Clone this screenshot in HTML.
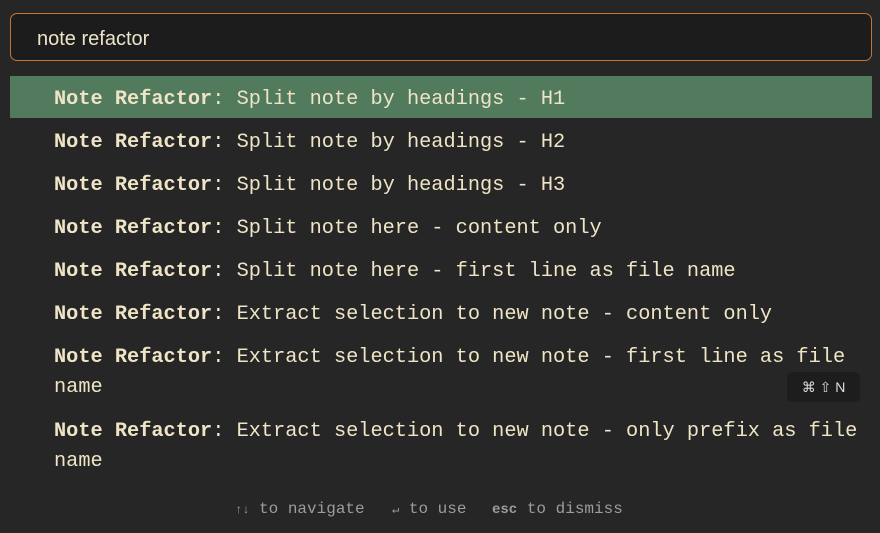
<!DOCTYPE html>
<html><head><style>
html,body{margin:0;padding:0;width:880px;height:533px;background:#262626;overflow:hidden}
body{position:relative;font-family:"Liberation Mono",monospace;color:#efe5c6}
.inp{position:absolute;left:10px;top:13px;width:862px;height:48px;border:1.5px solid #c47536;border-radius:7px;background:#1c1c1c;box-sizing:border-box}
.inp span{position:absolute;left:26px;top:14px;font-family:"Liberation Sans",sans-serif;font-size:20px;color:#ede4c8}
.row{position:absolute;left:10px;width:862px;font-size:20.3px;white-space:pre}
.row .t{position:absolute;left:44px}
.sel{background:#527a5c}
b{font-weight:bold}
.kb{position:absolute;left:787px;top:372px;width:73px;height:30px;background:#1d1d1d;border-radius:5px;font-family:"Liberation Sans",sans-serif;font-size:14px;color:#ddd;text-align:center;line-height:30px}
.ft{position:absolute;top:500px;font-size:16px;color:#9c9c9c;white-space:pre}
</style></head><body>
<div class="inp"><span>note refactor</span></div>
<div class="row sel" style="top:76px;height:42px"><span class="t" style="top:12px"><b>Note Refactor</b>: Split note by headings - H1</span></div>
<div class="row" style="top:131px"><span class="t"><b>Note Refactor</b>: Split note by headings - H2</span></div>
<div class="row" style="top:174px"><span class="t"><b>Note Refactor</b>: Split note by headings - H3</span></div>
<div class="row" style="top:217px"><span class="t"><b>Note Refactor</b>: Split note here - content only</span></div>
<div class="row" style="top:260px"><span class="t"><b>Note Refactor</b>: Split note here - first line as file name</span></div>
<div class="row" style="top:303px"><span class="t"><b>Note Refactor</b>: Extract selection to new note - content only</span></div>
<div class="row" style="top:346px"><span class="t"><b>Note Refactor</b>: Extract selection to new note - first line as file</span></div>
<div class="row" style="top:376px"><span class="t">name</span></div>
<div class="kb">⌘ ⇧ N</div>
<div class="row" style="top:420px"><span class="t"><b>Note Refactor</b>: Extract selection to new note - only prefix as file</span></div>
<div class="row" style="top:450px"><span class="t">name</span></div>
<div class="ft" style="left:235px"><span style="font-size:12px">↑↓</span> to navigate</div>
<div class="ft" style="left:392px"><span style="font-size:12px">↵</span> to use</div>
<div class="ft" style="left:492px"><b style="font-size:14px">esc</b> to dismiss</div>
</body></html>
